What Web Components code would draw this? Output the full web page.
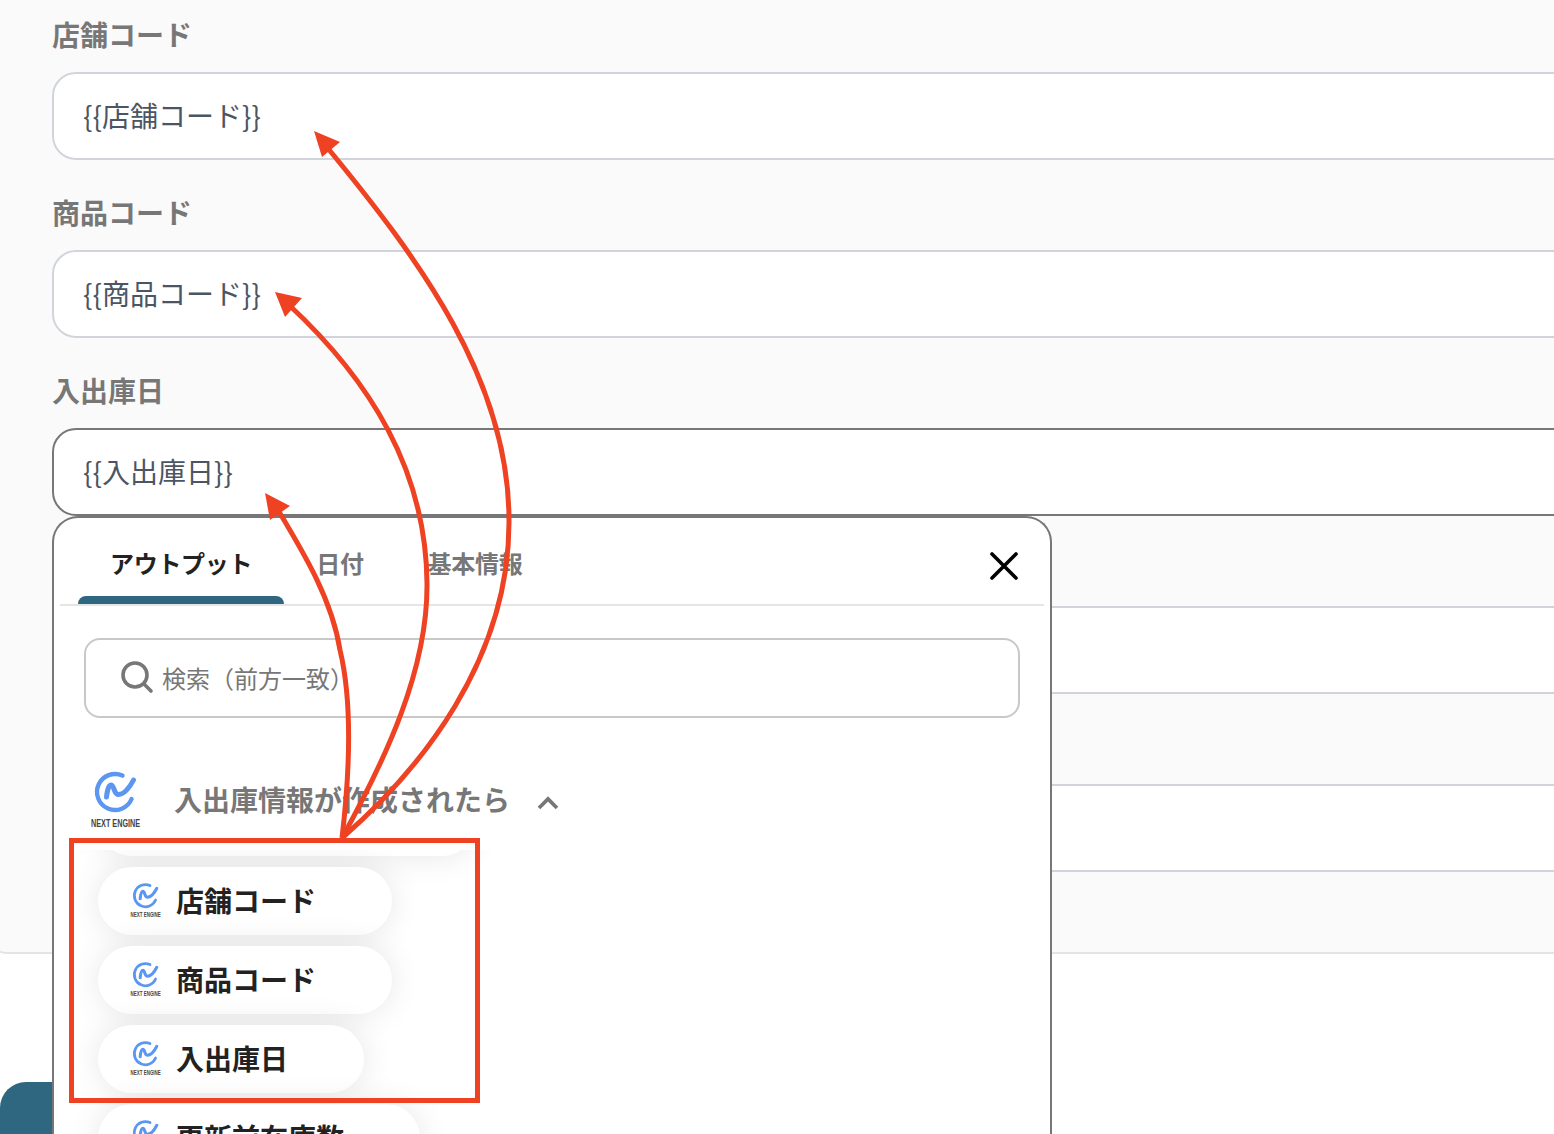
<!DOCTYPE html>
<html lang="ja">
<head>
<meta charset="utf-8">
<title>入出庫情報</title>
<style>
  html, body { margin: 0; padding: 0; background: #fff; }
  body {
    position: relative;
    height: 1134px;
    overflow: hidden;
    font-family: "Noto Sans CJK JP", "Noto Sans", sans-serif;
  }
</style>
</head>
<body>

<np-form>
  <np-field label="店舗コード" value="{{店舗コード}}"></np-field>
  <np-field label="商品コード" value="{{商品コード}}"></np-field>
  <np-field label="入出庫日" value="{{入出庫日}}" focused></np-field>
  <np-field></np-field>
  <np-field></np-field>
</np-form>
<np-save></np-save>

<np-picker>
  <np-tab selected>アウトプット</np-tab>
  <np-tab>日付</np-tab>
  <np-tab>基本情報</np-tab>
  <np-pill slot="list" style="width:378px;margin-top:-62px"></np-pill>
  <np-pill slot="list">店舗コード</np-pill>
  <np-pill slot="list">商品コード</np-pill>
  <np-pill slot="list">入出庫日</np-pill>
  <np-pill slot="list">更新前在庫数</np-pill>
</np-picker>

<np-annot></np-annot>

<script>
// one small helper so every element gets an open shadow root from its template
function make(name, html, extra) {
  const template = document.createElement('template');
  template.innerHTML = html;
  class El extends HTMLElement {
    constructor() {
      super();
      this._shadowRoot = this.attachShadow({ mode: 'open' });
      this._shadowRoot.appendChild(template.content.cloneNode(true));
    }
    connectedCallback() {
      if (extra) extra.call(this, this._shadowRoot);
    }
  }
  customElements.define(name, El);
}

make('np-form', `
  <style>
    :host {
      display: block;
      margin-left: -18px;
      padding: 14px 0 80px 68px;
      background: #fafafa;
      border: 2px solid #e2e4e8;
      border-top: 0;
      border-right: 0;
      border-radius: 0 0 0 26px;
      overflow: hidden;
    }
  </style>
  <slot></slot>
`);

make('np-field', `
  <style>
    :host { display: block; margin-bottom: 32px; width: 1700px; }
    :host(:last-child) { margin-bottom: 0; }
    #label {
      height: 42px;
      line-height: 40px;
      margin-bottom: 16px;
      font-size: 28px;
      font-weight: 700;
      color: #777;
    }
    #box {
      box-sizing: border-box;
      height: 88px;
      line-height: 83px;
      padding-left: 29px;
      background: #fff;
      border: 2px solid #d1d5db;
      border-radius: 24px;
      font-size: 28px;
      color: #4b5563;
    }
    :host([focused]) #box { border-color: #777; }
  </style>
  <div id="label"></div>
  <div id="box"></div>
`, function (root) {
  root.getElementById('label').textContent = this.getAttribute('label') || '\u00a0';
  root.getElementById('box').textContent = this.getAttribute('value') || '\u00a0';
});

make('np-save', `
  <style>
    :host {
      display: block;
      width: 300px;
      height: 52px;
      margin-top: 128px;
      background: #2f6680;
      border-radius: 26px 26px 0 0;
    }
  </style>
`);

make('np-logo', `
  <style>
    :host { display: block; width: 52px; height: 58px; }
    svg { display: block; width: 100%; height: 100%; }
    text { font-family: "Liberation Sans", sans-serif; font-weight: 700; font-size: 11.5px; fill: #444; }
  </style>
  <svg viewBox="0 0 52 58" fill="none">
    <path d="M32.5 5.6A18 18 0 1 0 41.6 29" stroke="#5b97f0" stroke-width="4.4" stroke-linecap="round"/>
    <path d="M16.5 27C17 22 18.5 15 21 15C24.5 15 23.5 24.5 28.5 24.5C34 24.5 40 17 43.5 10" stroke="#5b97f0" stroke-width="5" stroke-linecap="round"/>
    <text transform="translate(1 56.5) scale(.63 1)">NEXT ENGINE</text>
  </svg>
`);

make('np-tab', `
  <style>
    :host { display: flex; flex-direction: column; height: 86px; font-size: 24px; font-weight: 700; color: #777; letter-spacing: -.3px; }
    #text { flex: 1; display: flex; align-items: center; padding: 10px 32px 0; }
    #bar { height: 8px; border-radius: 8px 8px 0 0; }
    :host([selected]) { color: #222; }
    :host([selected]) #bar { background: #2f6680; }
  </style>
  <div id="text"><slot></slot></div>
  <div id="bar"></div>
`);

make('np-pill', `
  <style>
    :host {
      box-sizing: border-box;
      flex: none;
      display: flex;
      align-items: center;
      gap: 14px;
      width: max-content;
      height: 68px;
      padding: 0 76px 2px 32px;
      background: #fff;
      border-radius: 34px;
      box-shadow: 0 0 32px rgba(0, 0, 0, .1);
      font-size: 28px;
      font-weight: 700;
      color: #222;
    }
    np-logo { width: 32px; height: 36px; flex: none; }
  </style>
  <np-logo></np-logo>
  <slot></slot>
`);

make('np-picker', `
  <style>
    :host {
      position: absolute;
      left: 52px;
      top: 516px;
      box-sizing: border-box;
      width: 1000px;
      height: 618px;
      background: #fff;
      border: 2px solid #777;
      border-bottom: 0;
      border-radius: 26px 26px 0 0;
      overflow: hidden;
    }
    #tabs {
      display: flex;
      margin: 0 6px;
      padding-left: 18px;
      border-bottom: 2px solid #e5e5e5;
    }
    #close { margin-left: auto; margin-right: 26px; align-self: center; width: 28px; height: 28px; margin-top: 10px; }
    #search {
      box-sizing: border-box;
      display: flex;
      align-items: center;
      height: 80px;
      margin: 32px 30px 52px;
      padding: 0 0 2px 34px;
      border: 2px solid #c8c8c8;
      border-radius: 16px;
      font-size: 24px;
      color: #777;
    }
    #search svg { width: 34px; height: 34px; margin-right: 8px; flex: none; }
    #head {
      display: flex;
      align-items: center;
      height: 58px;
      padding-left: 36px;
      font-size: 28px;
      font-weight: 700;
      color: #777;
    }
    #head span { margin-left: 32px; }
    #head svg { width: 24px; height: 16px; margin-left: 26px; margin-top: 6px; }
    #list {
      display: flex;
      flex-direction: column;
      gap: 11px;
      height: 284px;
      margin-top: 22px;
      padding-left: 44px;
      overflow: hidden;
    }
  </style>
  <div id="tabs">
    <slot></slot>
    <svg id="close" viewBox="0 0 28 28" fill="none" stroke="#000" stroke-width="3.6" stroke-linecap="round"><path d="M2 2L26 26M26 2L2 26"/></svg>
  </div>
  <div id="search">
    <svg viewBox="0 0 34 34" fill="none" stroke="#777" stroke-width="3.6" stroke-linecap="round"><circle cx="15" cy="15" r="12"/><path d="M24 24L31 31"/></svg>
    検索（前方一致）
  </div>
  <div id="head">
    <np-logo></np-logo>
    <span>入出庫情報が作成されたら</span>
    <svg viewBox="0 0 24 16" fill="none" stroke="#777" stroke-width="3.8"><path d="M3 14L12 5L21 14"/></svg>
  </div>
  <div id="list"><slot name="list"></slot></div>
`);

make('np-annot', `
  <style>
    :host { position: absolute; left: 0; top: 0; width: 1554px; height: 1134px; pointer-events: none; }
    svg { position: absolute; left: 0; top: 0; }
    #box {
      position: absolute;
      left: 69px;
      top: 838px;
      box-sizing: border-box;
      width: 411px;
      height: 265px;
      border: 5px solid #ee4223;
    }
  </style>
  <div id="box"></div>
  <svg width="1554" height="1134" fill="none" stroke="#ee4223" stroke-width="5">
    <path d="M342 838C420 770 510 660 509 520C509 380 420 260 326 146"/>
    <path d="M342 838C385 760 428 670 427 583C426 470 370 380 288 304"/>
    <path d="M342 838C350 770 352 700 340 650C332 600 305 555 278 510"/>
    <g fill="#ee4223" stroke="none">
      <polygon points="314,131 340,142 322,157"/>
      <polygon points="275,292 302,298 285,317"/>
      <polygon points="265,493 290,506 270,520"/>
    </g>
  </svg>
`);
</script>
</body>
</html>
